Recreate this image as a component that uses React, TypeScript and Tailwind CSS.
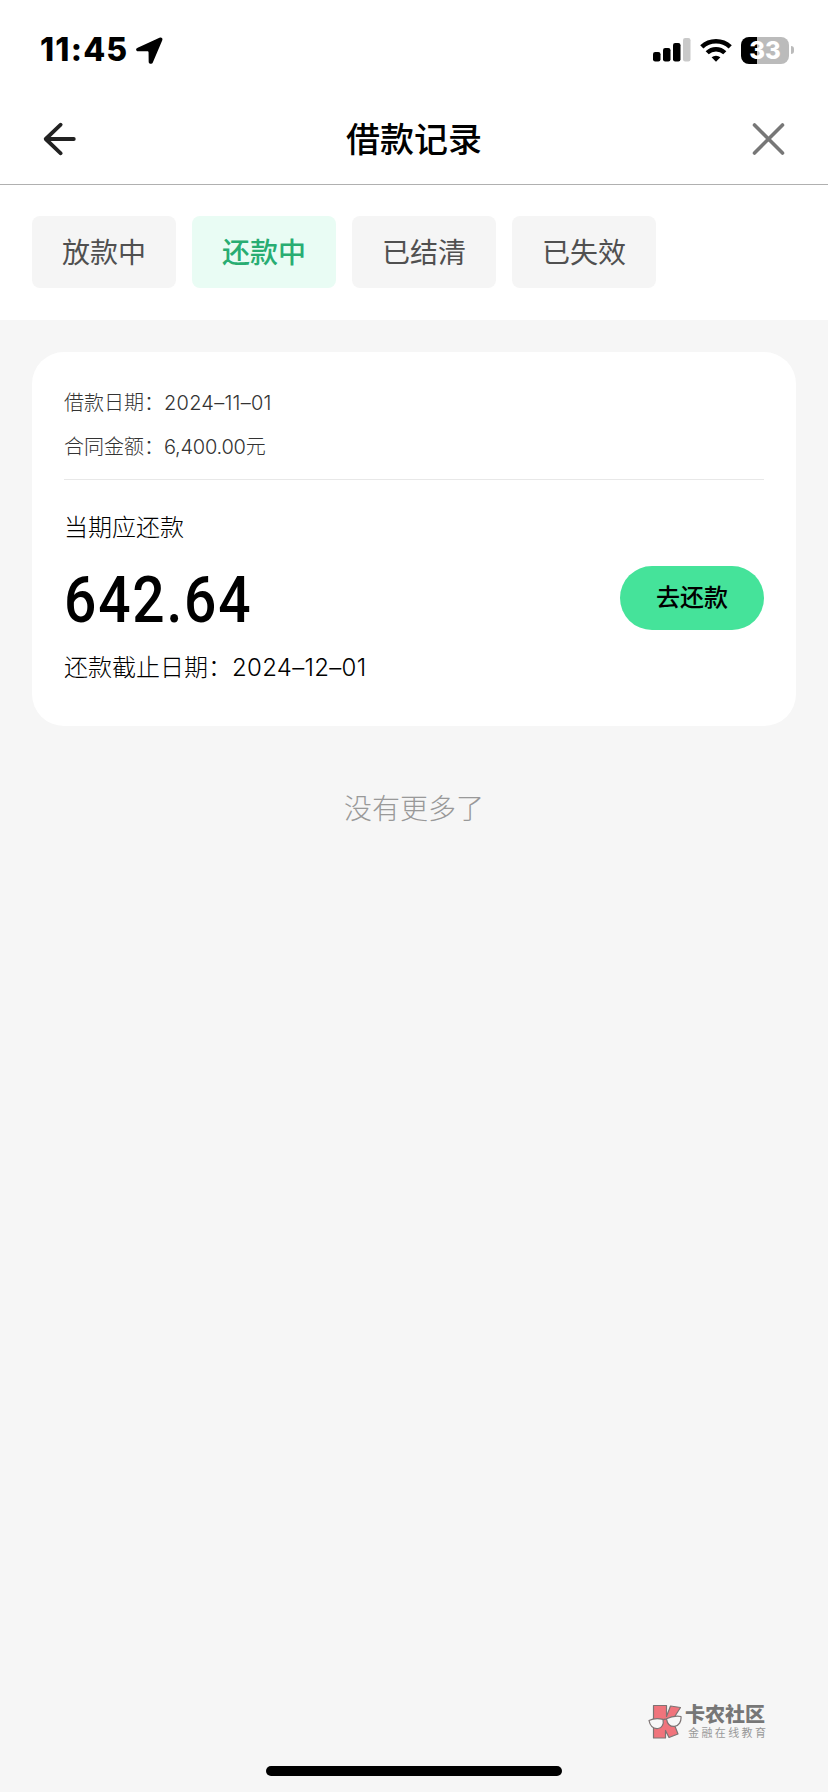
import clsx from "clsx";

const tabs = [
  { key: "lending", label: "放款中" },
  { key: "repaying", label: "还款中" },
  { key: "settled", label: "已结清" },
  { key: "invalid", label: "已失效" },
];

const loan = {
  date: "2024–11–01",
  amount: "6,400.00",
  due: "642.64",
  deadline: "2024–12–01",
};

const LocationIcon = (
  <svg width="27" height="27" viewBox="0 0 26 26">
    <path
      d="M1.600 10.400 22.600.7c2-.9 3.500.600 2.600 2.600L16.200 24.500c-.9 2.100-4 1.700-4-.6l-.1-8.900c0-.8-.4-1.200-1.200-1.200L2.100 13.700C-.3 13.600-.6 11.400 1.600 10.400Z"
      fill="#000"
    />
  </svg>
);

const SignalIcon = (
  <svg width="38" height="24" viewBox="0 0 38 24">
    <rect x="0" y="14" width="7.500" height="9.500" rx="2.200" />
    <rect x="10" y="10" width="7.500" height="13.500" rx="2.200" />
    <rect x="20" y="5" width="7.500" height="18.500" rx="2.200" />
    <rect x="30" y="0" width="7.500" height="23.500" rx="2.200" fill="#c9c9c9" />
  </svg>
);

const WifiIcon = (
  <svg width="32" height="24" viewBox="0 0 32 24" fill="none" stroke="#000">
    <path d="M1.800 8.900a20.500 20.500 0 0 1 28.400 0" strokeWidth="4.600" />
    <path d="M7.200 14.800a12.500 12.500 0 0 1 17.600 0" strokeWidth="4.400" />
    <path
      d="M11.600 19.300a6.800 6.800 0 0 1 8.800 0L16 23.800Z"
      fill="#000"
      stroke="none"
    />
  </svg>
);

const BackIcon = (
  <svg
    width="34"
    height="34"
    viewBox="0 0 34 34"
    fill="none"
    stroke="#222"
    strokeWidth="3.800"
    strokeLinecap="round"
    strokeLinejoin="round"
  >
    <path d="M17.700 2.700 2.700 17l15 14.300M2.700 17h28.100" />
  </svg>
);

const CloseIcon = (
  <svg
    width="34"
    height="34"
    viewBox="0 0 34 34"
    fill="none"
    stroke="#777"
    strokeWidth="3.600"
    strokeLinecap="round"
  >
    <path d="m3.500 3 28 28M31.500 3l-28 28" />
  </svg>
);

const KanongLogo = (
  <svg
    width="34"
    height="36"
    viewBox="0 0 34 36"
    stroke="#7d7474"
    strokeWidth="1.200"
    strokeLinejoin="round"
  >
    <path
      d="M5.500 1.500h13v11l4-10.500L32.500 3.500l-8 12.500 5.500 14-9 3.500-3.500-7V34h-12Z"
      fill="#f0747c"
    />
    <path
      d="M1 16.500c3.500-1.800 9-2.300 14-1.200 1 4.500-.8 8.700-5 9.200C5 25 2 21.500 1 16.500Z"
      fill="#f7f7f7"
    />
    <path
      d="M18.500 14.800c4.500-2.300 9.500-3.100 14.500-2.300.5 5-2 9.500-6.500 9.900-4.500.3-7.300-3-8-7.600Z"
      fill="#f7f7f7"
    />
    <path d="M15 16.200c1-1 2.500-1.200 3.500-.7" fill="none" />
  </svg>
);

const StatusBar = () => (
  <div className="h-24 flex justify-between pl-10 pr-[34px] pt-9">
    <div className="h-7 flex items-center">
      <span className="w-24 text-[32px] leading-7 font-extrabold tracking-[1.2px]">
        11:45
      </span>
      {LocationIcon}
    </div>
    <div className="h-7 flex items-center">
      {SignalIcon}
      <div className="ml-[9px] mr-[9px]">{WifiIcon}</div>
      <div className="w-12 h-[27px] rounded-lg bg-[linear-gradient(to_right,#000_16px,#bbb_16px)] text-center text-2xl leading-[27px] font-extrabold text-white">
        33
      </div>
      <div className="ml-0.5 w-[3px] h-2 rounded-r-full bg-[#bbb]" />
    </div>
  </div>
);

const Header = () => (
  <div className="h-[89px] flex items-center justify-between px-[43px] border-b border-[#b0b0b0]">
    <button className="pb-0.5">{BackIcon}</button>
    <h1 className="text-[34px] leading-10 font-medium">借款记录</h1>
    <button className="pb-0.5">{CloseIcon}</button>
  </div>
);

const LoanCard = () => (
  <div className="h-[374px] rounded-[32px] bg-white px-8 pt-[29px]">
    <div className="h-[99px] border-b border-[#e8e8e8] text-xl leading-[44px] font-light text-[#333]">
      <p>
        借款日期：<span className="tracking-[0.25px]">{loan.date}</span>
      </p>
      <p>
        合同金额：<span className="tracking-[-0.25px]">{loan.amount}元</span>
      </p>
    </div>
    <p className="mt-8 text-2xl leading-8 font-light">当期应还款</p>
    <div className="mt-[22px] h-16 flex items-center justify-between">
      <span className="pt-1.5 font-[Roboto] text-[64px] leading-[64px] font-medium tracking-[2px] origin-left scale-x-[0.89]">
        {loan.due}
      </span>
      <button className="w-36 h-16 rounded-full bg-[#45e39a] text-2xl font-medium">
        去还款
      </button>
    </div>
    <p className="mt-[22px] text-2xl leading-8 font-light">
      还款截止日期：
      <span className="tracking-[0.3px]">{loan.deadline}</span>
    </p>
  </div>
);

const App = () => {
  const active = "repaying";

  return (
    <div className="w-[828px] h-[1792px] flex flex-col bg-[#f6f6f6] text-black font-['Inter','Noto_Sans_CJK_SC',sans-serif]">
      <div className="h-80 bg-white">
        <StatusBar />
        <Header />
        <div className="flex gap-4 px-8 pt-[31px]">
          {tabs.map((tab) => (
            <button
              key={tab.key}
              className={clsx(
                "w-36 h-[72px] pt-0.5 rounded-lg text-[28px] leading-10",
                tab.key === active
                  ? "bg-[#e9fcf4] text-[#28ad72] font-medium"
                  : "bg-[#f5f5f5] text-[#505050]"
              )}
            >
              {tab.label}
            </button>
          ))}
        </div>
      </div>
      <div className="flex-1 px-8 pt-8">
        <LoanCard />
        <p className="mt-[63px] text-center text-[28px] leading-10 font-light text-[#999]">
          没有更多了
        </p>
      </div>
      <div className="h-[62px] mr-[61px] flex justify-end">
        <div className="flex gap-[3px]">
          {KanongLogo}
          <div className="w-[82px] text-[#777]">
            <p className="text-xl leading-[22px] font-black">卡农社区</p>
            <p className="pl-[3px] text-[11px] leading-[14px] tracking-[2.4px] whitespace-nowrap text-[#999]">
              金融在线教育
            </p>
          </div>
        </div>
      </div>
      <div className="mx-auto mb-4 w-[296px] h-2.5 shrink-0 rounded-full bg-black" />
    </div>
  );
};

export default App;
